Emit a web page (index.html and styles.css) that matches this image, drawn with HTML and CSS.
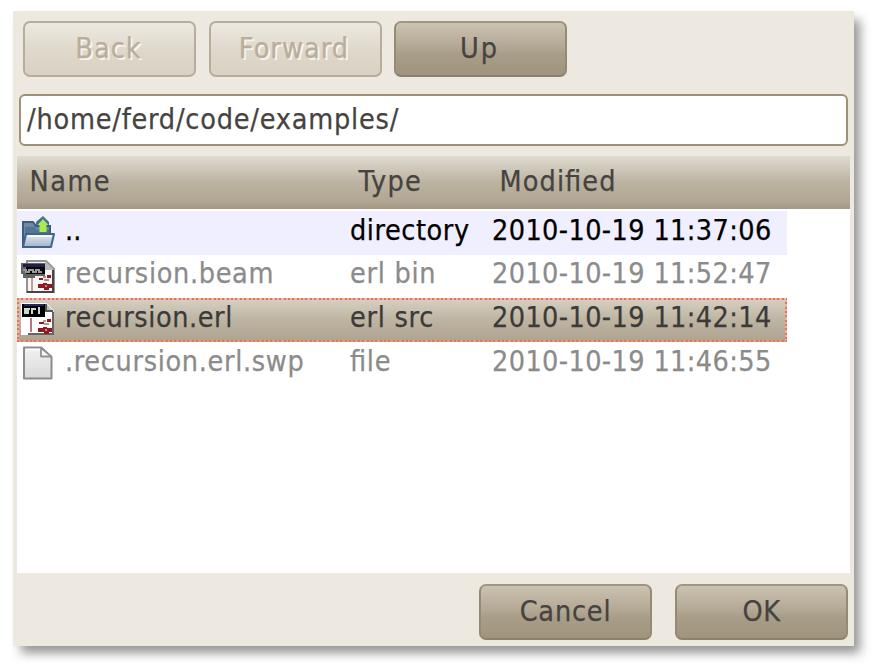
FILE: index.html
```html
<!DOCTYPE html>
<html lang="en">
<head>
<meta charset="utf-8">
<title>Open file</title>
<link rel="stylesheet" href="styles.css">
</head>
<body>
<main class="dialog">
  <nav class="toolbar">
    <button class="button" disabled><span class="t-back">Back</span></button>
    <button class="button" disabled><span class="t-forward">Forward</span></button>
    <button class="button"><span class="t-up">Up</span></button>
  </nav>
  <div class="path"><span class="t-path">/home/ferd/code/examples/</span></div>
  <section class="list">
    <header class="columns">
      <span class="t-name">Name</span><span class="t-type">Type</span><span class="t-mod">Modified</span>
    </header>
    <div class="rows">
      <div class="row parent">
        <svg class="icon" viewBox="0 0 34 34">
          <path d="M2 32V7h10l3 4h14v21z" fill="#6c89a7" stroke="#3d5d7e" stroke-width="2"/>
          <path d="M4 12h10l2 3h12v4H6l-2 8z" fill="#557493"/>
          <path d="M5 19h28l-3 13H2z" fill="url(#folder)" stroke="#426486" stroke-width="2" stroke-linejoin="round"/>
          <path d="M6.5 21h24" stroke="#f4f7fb" stroke-width="2"/>
          <path d="M22 1l6 6v3h-3v7h-6v-7h-4V7z" fill="#3e708f"/>
          <path d="M22 4l5.500 6h-2v7h-7v-7h-2z" fill="#a9ec50"/>
          <defs><linearGradient id="folder" x2="0" y2="1"><stop stop-color="#e4eaf4"/><stop offset="1" stop-color="#9eb4cf"/></linearGradient></defs>
        </svg>
        <span class="t-dots">..</span><span class="t-directory">directory</span><span class="date">2010-10-19 11:37:06</span>
      </div>
      <div class="row">
        <svg class="icon" viewBox="0 0 34 34">
          <path d="M6 2h19l8 8v23H6z" fill="#f6f6f6" stroke="#929292" stroke-width="2"/>
          <path d="M24 2l9 9h-9z" fill="#b8b8b8"/>
          <path d="M10 16h2v16h-2z" fill="#c79a9c"/>
          <path d="M32 11v22H6" fill="none" stroke="#454545" stroke-width="2"/>
          <path d="M0 4h24v13H14v2H2v-4H0z" fill="#646464"/>
          <path d="M2 5h22v3H2z" fill="#20204c"/>
          <path d="M5 8h19v7H5z" fill="#080808"/>
          <path d="M2 11h3v2h3v-2h4v2h3v-2h3v2h3" fill="none" stroke="#999" stroke-width="2"/>
          <path d="M18 19h4v2h-4zM26 16h4v3h-4zM17 25h5v-1h4v1h5v4h-3v2h-5v-2h-6z" fill="#8d1a20"/>
          <path d="M22 18h3M23 21h5M25 26v2" stroke="#c68185" stroke-width="2"/>
        </svg>
        <span class="t-beam">recursion.beam</span><span class="t-bin">erl bin</span><span class="date">2010-10-19 11:52:47</span>
      </div>
      <div class="row selected">
        <svg class="icon" viewBox="0 0 34 34">
          <path d="M0 1h26l7 8v24H0z" fill="#fff"/>
          <path d="M25 1l8 9h-8z" fill="#bebebe"/>
          <path d="M25 2v7h7" fill="none" stroke="#555" stroke-width="2"/>
          <path d="M32 10v22H7" fill="none" stroke="#656565" stroke-width="2"/>
          <path d="M10 16v14" stroke="#b7777b" stroke-width="2"/>
          <path d="M1 2h23v13H1z" fill="#000"/>
          <path d="M3 3h20" stroke="#29295e" stroke-width="2"/>
          <path d="M9 7H4v4h4M4 9h4M11 12V7h4M18 5v7" fill="none" stroke="#d2d2d2" stroke-width="2"/>
          <path d="M18 20h5v2h-5zM26 17h4v3h-4zM17 26h5v-1h4v1h5v4h-3v2h-5v-2h-6z" fill="#8d1a20"/>
          <path d="M22 19h3M23 22h5M25 27v2" stroke="#cf8a8d" stroke-width="2"/>
        </svg>
        <span class="t-erl">recursion.erl</span><span class="t-src">erl src</span><span class="date">2010-10-19 11:42:14</span>
      </div>
      <div class="row">
        <svg class="icon" viewBox="0 0 34 34">
          <path d="M3 1.500h17.500L30.500 11.500v21H3z" fill="url(#page)" stroke="#8c8c8c" stroke-width="2" stroke-linejoin="round"/>
          <path d="M5 3.500h15" stroke="#fff" stroke-width="1.500"/>
          <path d="M20 2v8.500h10.500z" fill="#f8f8f8" stroke="#929292" stroke-width="1.800" stroke-linejoin="round"/>
          <defs><linearGradient id="page" x2="0" y2="1"><stop stop-color="#f2f2f2"/><stop offset="1" stop-color="#d9d9d9"/></linearGradient></defs>
        </svg>
        <span class="t-swp">.recursion.erl.swp</span><span class="t-file">file</span><span class="date">2010-10-19 11:46:55</span>
      </div>
    </div>
  </section>
  <footer class="actions">
    <button class="button"><span class="t-cancel">Cancel</span></button>
    <button class="button"><span class="t-ok">OK</span></button>
  </footer>
</main>
</body>
</html>
```
FILE: styles.css
```css
* { box-sizing: border-box; }
body {
  margin: 0;
  width: 875px;
  height: 666px;
  padding: 11px 21px 20px 13px;
  background: #fff;
  overflow: hidden;
  font: 28.500px/1 "DejaVu Sans Condensed", "DejaVu Sans", sans-serif;
  font-stretch: condensed;
  font-feature-settings: "liga" 1;
  -webkit-text-stroke: .25px;
  color: #464340;
}
.dialog {
  width: 841px;
  height: 635px;
  padding: 10px 4px 6px;
  display: flex;
  flex-direction: column;
  background: #ede8e0;
  box-shadow: 7px 8px 10px -1px rgba(0, 0, 0, .42);
}
.toolbar { display: flex; gap: 12.500px; padding-left: 6px; }
.button {
  width: 173px;
  height: 56px;
  padding: 0;
  border: 2px solid #958b75;
  border-top-color: #a0967f;
  border-bottom-color: #8b816d;
  border-radius: 7px;
  background: linear-gradient(#cbc2b1, #b4a995 45%, #a89d88 60%, #a0947d);
  color: #464340;
  font: inherit;
  font-feature-settings: inherit;
}
.button:disabled {
  border-color: #b7ad9a;
  background: linear-gradient(#ede9e1, #ded7ca 55%, #d9d1c4);
  color: #b9ae9b;
  text-shadow: 2px 2px 0 #f7f4ee;
}
.toolbar .button { padding-right: 2px; }
.path {
  height: 52px;
  margin: 17px 2px 10px;
  padding: 10px 6px;
  border: 2px solid #9d9277;
  border-radius: 6px;
  background: #fff;
}
.list { height: 417px; background: #fff; }
.columns {
  height: 53px;
  display: grid;
  grid-template-columns: 329px 141px 1fr;
  align-items: center;
  padding: 1px 0 0 12.500px;
  background: linear-gradient(#dfdbd0, #cec8ba 25%, #bcb3a2 50%, #b0a692 88%, #a69b86 98%);
  border-bottom: 1px solid #a69b86;
}
.rows { padding-top: 2px; }
.row {
  width: 770px;
  height: 43.700px;
  display: grid;
  grid-template-columns: 44.500px 285px 142px 1fr;
  align-items: center;
  padding-left: 3.500px;
  padding-bottom: 4px;
  color: #8b8b8b;
}
.icon { width: 34px; height: 34px; position: relative; top: 1px; }
.parent { background: #f0efff; color: #000; }
.selected {
  color: #3c3a38;
  background:
    repeating-linear-gradient(90deg, #e96f57 0 2px, #e3b8a7 2px 4.370px) top / 100% 2px no-repeat,
    repeating-linear-gradient(90deg, #e96f57 0 2px, #d6a08d 2px 4.370px) bottom / 100% 2px no-repeat,
    repeating-linear-gradient(#e96f57 0 2px, #e3b8a7 2px 4.370px) left / 2px 100% no-repeat,
    repeating-linear-gradient(#e96f57 0 2px, #e3b8a7 2px 4.370px) right / 2px 100% no-repeat,
    linear-gradient(#d8d1c3, #bdb4a2 50%, #aea38f);
}
.actions { margin-top: 11px; display: flex; justify-content: flex-end; gap: 23px; padding-right: 2px; }

.date { letter-spacing: .390px; }
.t-beam, .t-swp { letter-spacing: .660px; }
.t-erl, .t-directory { letter-spacing: .560px; }
.t-bin, .t-src { letter-spacing: .720px; }
.t-file { letter-spacing: .700px; }
.t-path { letter-spacing: .780px; }
.t-name { letter-spacing: 1.500px; }
.t-type { letter-spacing: 1.300px; }
.t-mod { letter-spacing: 1.100px; }
.t-back, .t-forward { letter-spacing: 1.050px; }
.t-up { letter-spacing: 2px; }
.t-cancel { letter-spacing: .800px; }
.t-ok { letter-spacing: .500px; }
```
